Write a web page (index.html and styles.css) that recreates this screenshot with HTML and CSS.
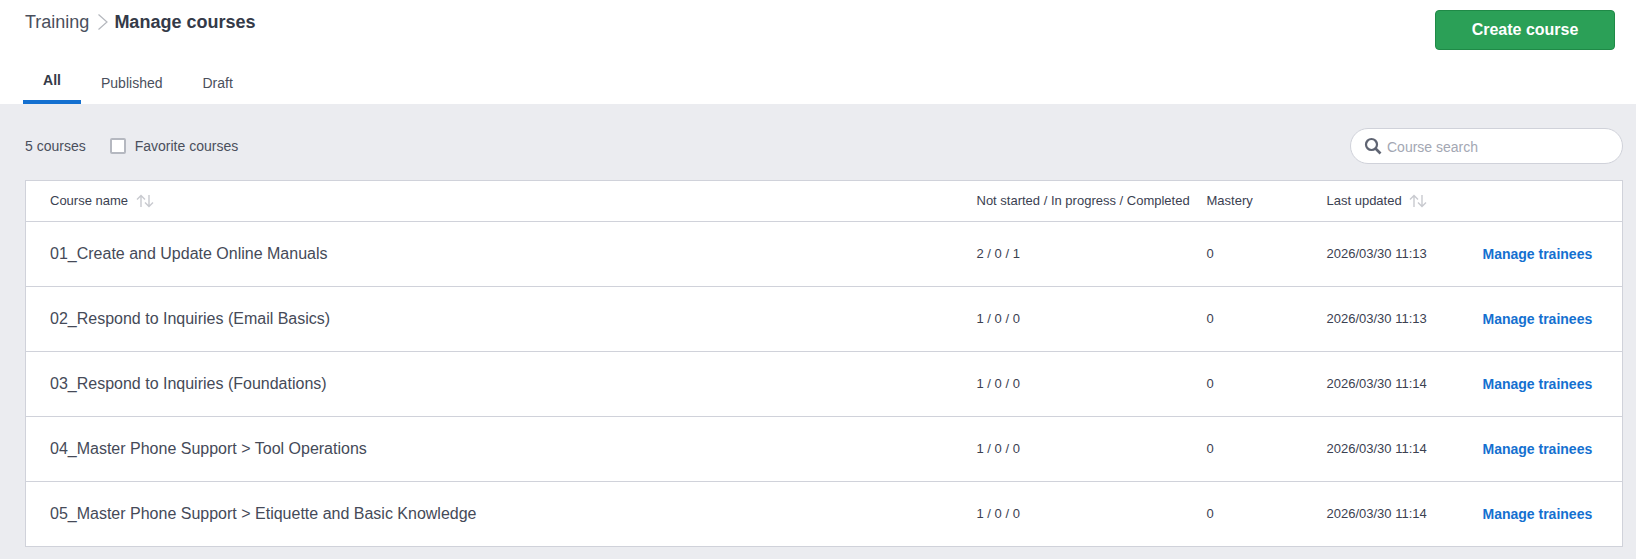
FILE: index.html
```html
<!DOCTYPE html>
<html lang="en">
<head>
  <meta charset="UTF-8">
  <meta name="viewport" content="width=device-width, initial-scale=1.0">
  <title>Manage courses</title>
  <link rel="stylesheet" href="styles.css">
</head>
<body>
  <header class="top">
    <div class="top-row">
      <div class="crumbs">
        <span class="crumb">Training</span>
        <svg class="crumb-sep" width="12" height="18" viewBox="0 0 12 18"><path d="M1.5 1.5 L10 9 L1.5 16.5" fill="none" stroke="#b4b7bd" stroke-width="1.2"/></svg>
        <span class="crumb-now">Manage courses</span>
      </div>
      <button class="btn-create">Create course</button>
    </div>
    <nav class="tabs">
      <a class="tab active">All</a>
      <a class="tab">Published</a>
      <a class="tab">Draft</a>
    </nav>
  </header>

  <main class="content">
    <div class="toolbar">
      <span class="count">5 courses</span>
      <label class="fav"><span class="box"></span>Favorite courses</label>
      <div class="search">
        <svg width="18" height="18" viewBox="0 0 18 18"><circle cx="7.5" cy="7.5" r="5.5" fill="none" stroke="#5f6472" stroke-width="2.2"/><path d="M11.5 11.5 L16.5 16.5" stroke="#5f6472" stroke-width="2.6"/></svg>
        <span class="search-text">Course search</span>
      </div>
    </div>

    <table class="courses">
      <colgroup>
        <col class="c-name"><col class="c-prog"><col class="c-mast"><col class="c-date"><col class="c-act">
      </colgroup>
      <thead>
        <tr>
          <th>Course name
            <svg class="sort" width="18" height="14" viewBox="0 0 18 14"><path d="M5 13 V1.5 M1 5.5 L5 1.5 L9 5.5 M13 1 V12.5 M9 8.5 L13 12.5 L17 8.5" fill="none" stroke="#c8cacf" stroke-width="1.4"/></svg>
          </th>
          <th>Not started / In progress / Completed</th>
          <th>Mastery</th>
          <th>Last updated
            <svg class="sort" width="18" height="14" viewBox="0 0 18 14"><path d="M5 13 V1.5 M1 5.5 L5 1.5 L9 5.5 M13 1 V12.5 M9 8.5 L13 12.5 L17 8.5" fill="none" stroke="#c8cacf" stroke-width="1.4"/></svg>
          </th>
          <th></th>
        </tr>
      </thead>
      <tbody>
        <tr>
          <td class="name">01_Create and Update Online Manuals</td>
          <td>2 / 0 / 1</td><td>0</td><td>2026/03/30 11:13</td>
          <td class="action"><a class="manage">Manage trainees</a></td>
        </tr>
        <tr>
          <td class="name">02_Respond to Inquiries (Email Basics)</td>
          <td>1 / 0 / 0</td><td>0</td><td>2026/03/30 11:13</td>
          <td class="action"><a class="manage">Manage trainees</a></td>
        </tr>
        <tr>
          <td class="name">03_Respond to Inquiries (Foundations)</td>
          <td>1 / 0 / 0</td><td>0</td><td>2026/03/30 11:14</td>
          <td class="action"><a class="manage">Manage trainees</a></td>
        </tr>
        <tr>
          <td class="name">04_Master Phone Support &gt; Tool Operations</td>
          <td>1 / 0 / 0</td><td>0</td><td>2026/03/30 11:14</td>
          <td class="action"><a class="manage">Manage trainees</a></td>
        </tr>
        <tr>
          <td class="name">05_Master Phone Support &gt; Etiquette and Basic Knowledge</td>
          <td>1 / 0 / 0</td><td>0</td><td>2026/03/30 11:14</td>
          <td class="action"><a class="manage">Manage trainees</a></td>
        </tr>
      </tbody>
    </table>
  </main>
</body>
</html>
```

FILE: styles.css
```css
* {
  box-sizing: border-box;
}

html, body {
  height: 100%;
}

body {
  margin: 0;
  font-family: "Liberation Sans", Arial, sans-serif;
  color: #3b4151;
  background: #ebecf0;
  overflow: hidden;
}

.top {
  background: #fff;
  height: 104px;
  padding: 0 21px 0 23px;
}

.top-row {
  display: flex;
  justify-content: space-between;
  align-items: flex-start;
  height: 60px;
}

.crumbs {
  display: flex;
  align-items: center;
  padding: 12px 0 0 2px;
  line-height: 20px;
  font-size: 18px;
}

.crumb {
  color: #4a4f5c;
}

.crumb-sep {
  margin: 0 5px 0 8px;
}

.crumb-now {
  font-weight: bold;
  color: #343a48;
}

.btn-create {
  width: 180px;
  height: 40px;
  margin-top: 10px;
  background: #2ba057;
  border: 1px solid #1f8a47;
  border-radius: 4px;
  color: #fff;
  font-family: inherit;
  font-size: 16px;
  font-weight: bold;
}

.tabs {
  display: flex;
  height: 44px;
}

.tab {
  display: block;
  height: 44px;
  padding-top: 15px;
  font-size: 14px;
  line-height: 16px;
  color: #4a4f5c;
  margin-right: 40px;
}

.tab.active {
  width: 58px;
  margin-right: 20px;
  padding-top: 12px;
  text-align: center;
  font-weight: bold;
  color: #343a48;
  border-bottom: 4px solid #1470d0;
}

.content {
  padding: 0 13px 0 25px;
}

.toolbar {
  display: flex;
  align-items: center;
  height: 76px;
  padding-top: 8px;
  font-size: 14px;
  color: #4a4f5c;
}

.fav {
  display: flex;
  align-items: center;
  margin-left: 24px;
}

.box {
  width: 16px;
  height: 16px;
  margin-right: 9px;
  background: #fff;
  border: 2px solid #b5b8c0;
  border-radius: 2px;
}

.search {
  display: flex;
  align-items: center;
  width: 273px;
  height: 36px;
  margin-left: auto;
  padding-left: 13px;
  background: #fff;
  border: 1px solid #d0d2da;
  border-radius: 18px;
}

.search-text {
  margin-left: 5px;
  padding-top: 2px;
  color: #a3a7b3;
}

.courses {
  width: 100%;
  table-layout: fixed;
  border-collapse: collapse;
  background: #fff;
  border: 1px solid #d0d2da;
  font-size: 13px;
}

.c-name { width: 951px; }
.c-prog { width: 230px; }
.c-mast { width: 120px; }
.c-date { width: 156px; }

th {
  height: 41px;
  padding: 0 0 2px;
  text-align: left;
  font-weight: normal;
  color: #3b4151;
  border-bottom: 1px solid #d0d2da;
}

th:first-child, .name {
  padding-left: 24px;
}

.sort {
  vertical-align: -3px;
  margin-left: 4px;
}

td {
  height: 65px;
  padding: 0 0 2px;
  border-bottom: 1px solid #d0d2da;
}

td.name {
  padding-bottom: 0;
  font-size: 16px;
  color: #454a58;
}

td.action {
  padding-bottom: 0;
}

.manage {
  font-size: 14px;
  font-weight: bold;
  color: #1470d0;
}
```
